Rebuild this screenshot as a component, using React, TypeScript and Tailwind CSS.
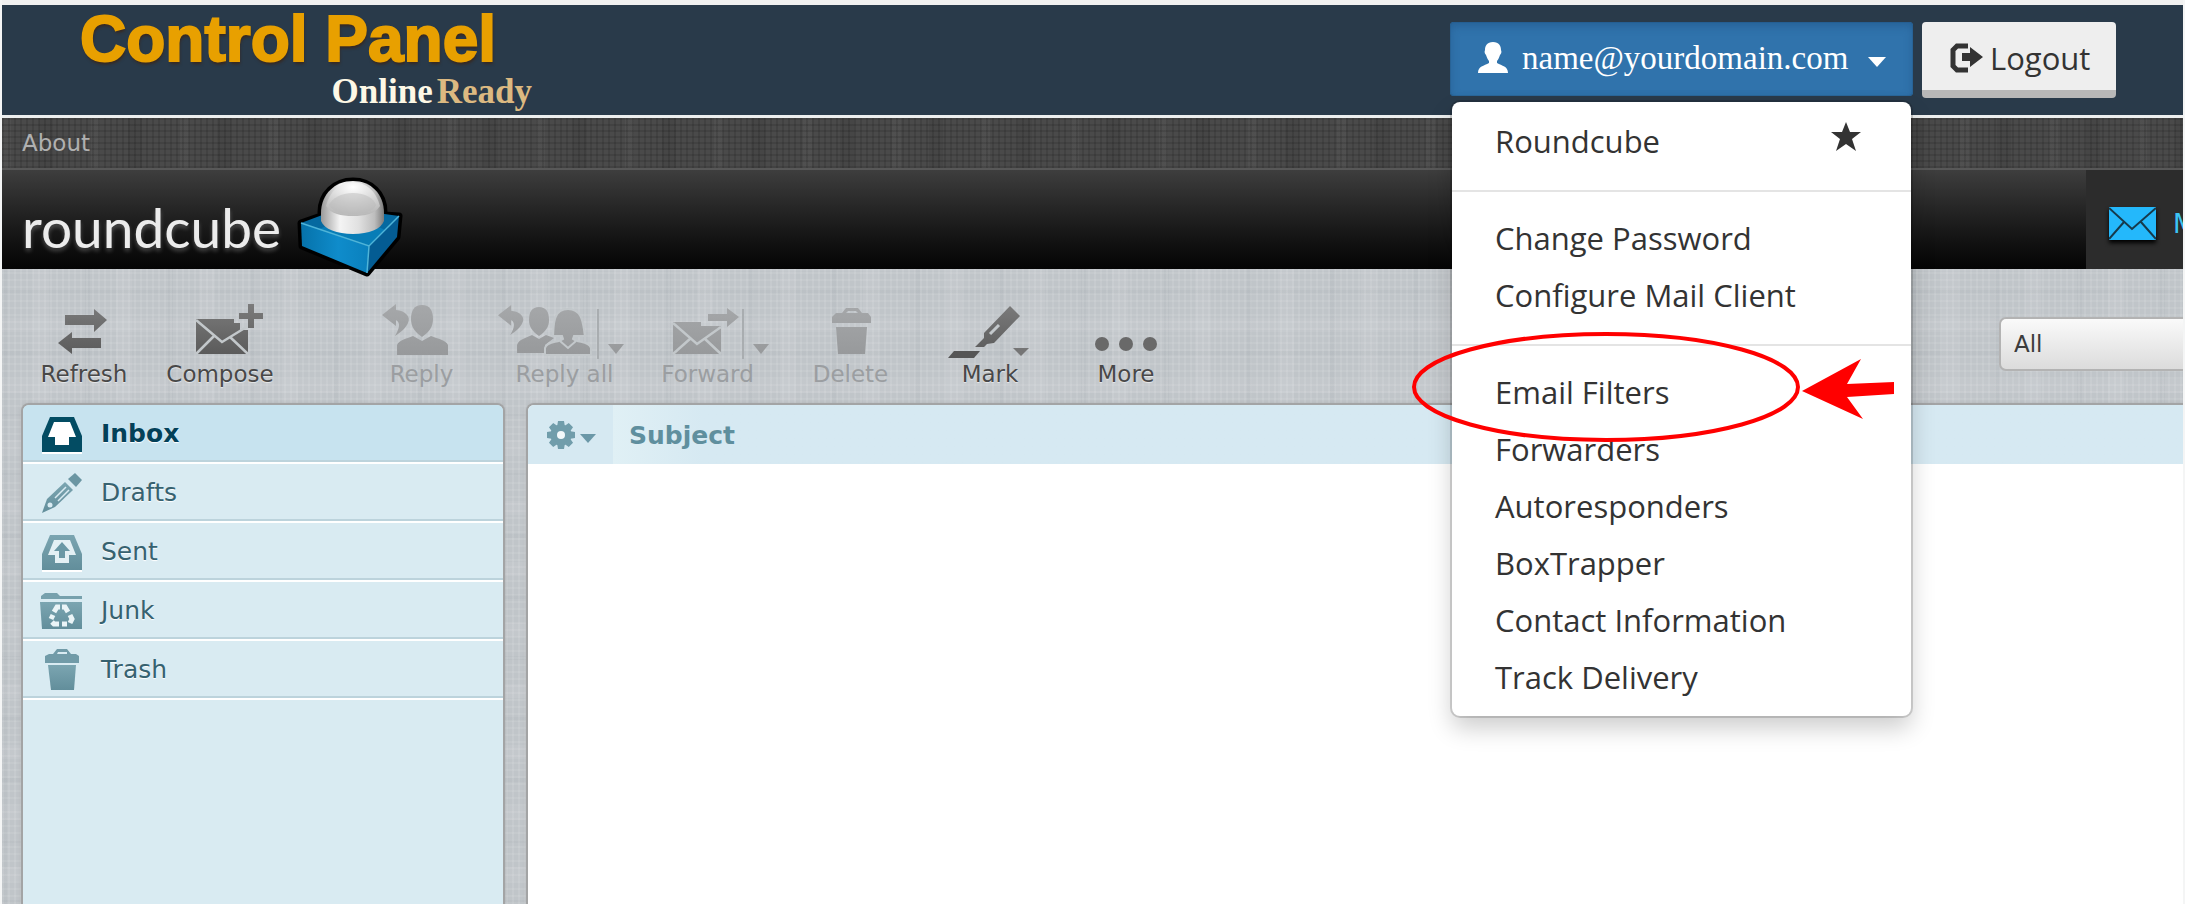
import React from "react";

const linenLight =
  "bg-[#c0c5c9] bg-[image:repeating-linear-gradient(90deg,rgba(255,255,255,0.09)_0_2px,transparent_2px_6px),repeating-linear-gradient(0deg,rgba(255,255,255,0.08)_0_2px,transparent_2px_7px),repeating-linear-gradient(90deg,rgba(110,120,130,0.05)_0_5px,transparent_5px_31px,rgba(255,255,255,0.06)_31px_47px,transparent_47px_83px),repeating-linear-gradient(0deg,rgba(110,120,130,0.05)_0_4px,transparent_4px_23px,rgba(255,255,255,0.06)_23px_37px,transparent_37px_61px)]";

const linenDark =
  "bg-[#4a4a4a] bg-[image:repeating-linear-gradient(90deg,rgba(0,0,0,0.11)_0_2px,transparent_2px_6px),repeating-linear-gradient(0deg,rgba(0,0,0,0.11)_0_2px,transparent_2px_6px),repeating-linear-gradient(90deg,rgba(255,255,255,0.03)_0_9px,transparent_9px_37px,rgba(0,0,0,0.06)_37px_51px,transparent_51px_89px)]";

function Gradients() {
  return (
    <svg className="absolute size-0" aria-hidden="true">
      <defs>
        <linearGradient id="ink" x1="0" y1="0" x2="0" y2="56" gradientUnits="userSpaceOnUse">
          <stop offset="0" stopColor="#7c7c7c" />
          <stop offset="1" stopColor="#585858" />
        </linearGradient>
        <linearGradient id="faded" x1="0" y1="0" x2="0" y2="56" gradientUnits="userSpaceOnUse">
          <stop offset="0" stopColor="#a6a8aa" />
          <stop offset="1" stopColor="#96989a" />
        </linearGradient>
        <linearGradient id="teal" x1="0" y1="0" x2="0" y2="1">
          <stop offset="0" stopColor="#7ba5b1" />
          <stop offset="1" stopColor="#628e9b" />
        </linearGradient>
      </defs>
    </svg>
  );
}

function CubeLogo() {
  return (
    <svg viewBox="0 0 114 108" className="h-[108px] w-[114px] shrink-0" aria-hidden="true">
      <defs>
        <linearGradient id="dome" x1="0" y1="0" x2="1" y2="0">
          <stop offset="0" stopColor="#9a9a9a" />
          <stop offset="0.3" stopColor="#f4f4f4" />
          <stop offset="0.6" stopColor="#e0e0e0" />
          <stop offset="0.85" stopColor="#bdbdbd" />
          <stop offset="1" stopColor="#7c7c7c" />
        </linearGradient>
        <radialGradient id="cap" cx="0.5" cy="0.15" r="0.9">
          <stop offset="0" stopColor="#ffffff" />
          <stop offset="0.5" stopColor="#d9d9d9" />
          <stop offset="1" stopColor="#b4b4b4" />
        </radialGradient>
        <linearGradient id="front" x1="0" y1="0" x2="1" y2="0">
          <stop offset="0" stopColor="#0672aa" />
          <stop offset="0.55" stopColor="#0f8ccb" />
          <stop offset="1" stopColor="#0a80bd" />
        </linearGradient>
      </defs>
      <path
        d="M10 51 30 44V40C30 22 44 9 62 9S93 22 93 40V43L108 44 106 65 76 101 11 74Z"
        fill="#000"
        stroke="#000"
        strokeWidth="7"
        strokeLinejoin="round"
      />
      <path d="M10 51 50 36 108 44 78 74Z" fill="#0569a0" />
      <path d="M28 57C40 70 62 70 78 74L94 58C80 50 50 48 28 57Z" fill="#0a8ac6" opacity="0.6" />
      <path d="M10 51 78 74 76 101 11 74Z" fill="url(#front)" />
      <path d="M108 44 78 74 76 101 106 65Z" fill="#045c93" />
      <path d="M10 51 78 74 108 44M78 74 76 101" fill="none" stroke="#4fb4d8" strokeWidth="1.5" />
      <path d="M30 41C30 22 44 9 62 9S93 22 93 41V49C90 57 78 62 62 62S33 57 30 49Z" fill="url(#dome)" />
      <path d="M35 34C39 19 49 10 62 10S85 19 89 34C84 42 74 44 62 44S40 42 35 34Z" fill="url(#cap)" />
      <path d="M38 33C41 26 50 21 62 21S83 26 85 33C82 40 73 42 62 42S42 40 38 33Z" fill="#b9b9b9" opacity="0.45" />
    </svg>
  );
}

const dim = "url(#faded)";
const ink = "url(#ink)";
const bg = "#c3c8cb";

const replyArrow = "M0 11 14 0V6C24 7 29 13 26 19C24 24 19 28 13 32C17 25 19 19 14 16V22Z";

const toolIcons: Record<string, React.ReactNode> = {
  Refresh: (
    <g fill={ink}>
      <path d="M49 12H78V6L91 17 78 29V22H49Z" />
      <path d="M85 35H56V29L42 40 56 51V45H85Z" />
    </g>
  ),
  Compose: (
    <>
      <path d="M44 16H82V20H88V27H96V51H44Z" fill={ink} />
      <path d="M44 17 70 39 96 23M44 51 62 33M96 51 78 34" stroke={bg} strokeWidth="2.5" fill="none" />
      <path d="M96 1H102V10H111V16H102V25H96V16H87V10H96Z" fill={ink} />
    </>
  ),
  Reply: (
    <g fill={dim}>
      <path d={replyArrow} transform="translate(28 1)" />
      <path d="M68 2C76 2 79 8 79 16C79 24 75 29 68 34C61 29 57 24 57 16C57 8 60 2 68 2Z" />
      <path d="M43 52V42C45 37 52 36 59 33L68 38 77 33C84 36 92 37 94 42V52Z" />
    </g>
  ),
  "Reply all": (
    <>
      <g fill={dim}>
        <path d={replyArrow} transform="translate(1 2) scale(0.94)" />
        <path d="M42 4C49 4 52 9 52 17C52 24 49 28 42 33C35 28 32 24 32 17C32 9 35 4 42 4Z" />
        <path d="M20 50V42C22 36 29 35 35 32L42 36 49 32 57 35 48 42V50Z" />
      </g>
      <path
        d="M56 33C57 24 55 6 71 6C87 6 86 24 88 33H77L76 36C81 40 92 38 94 45V52H48V45C50 38 61 40 66 36L65 33Z"
        fill={dim}
        stroke={bg}
        strokeWidth="2"
      />
      <path d="M111 41H127L119 51Z" fill={dim} />
      <path d="M63 38 71 45 79 38" stroke={bg} strokeWidth="2" fill="none" />
      <path d="M101 6V56" stroke="#a9adb0" strokeWidth="2" />
    </>
  ),
  Forward: (
    <>
      <path d="M33 19H61V23H81V51H33Z" fill={dim} />
      <path d="M33 20 57 41 81 24M33 51 51 35M81 51 64 35" stroke={bg} strokeWidth="2.5" fill="none" />
      <path d="M68 11H87V5L99 14 87 24V18H68Z" fill={dim} />
      <path d="M113 41H129L121 51Z" fill={dim} />
      <path d="M103 6V56" stroke="#a9adb0" strokeWidth="2" />
    </>
  ),
  Delete: (
    <g fill={dim}>
      <path fillRule="evenodd" d="M49 20V14L53 10H59L63 5H75L79 10H85L88 14V20ZM63 10H75L73 8H65Z" />
      <path d="M53 24H84L82 51H55Z" />
    </g>
  ),
  Mark: (
    <>
      <path d="M88 3 98 13 72 40 65 41 62 44H53L62 35V30Z" fill={ink} />
      <path d="M68 31 77 22" stroke={bg} strokeWidth="3" />
      <path d="M26 55 32 48H58L52 55Z" fill="#555" />
      <path d="M91 45H107L99 53Z" fill="#757575" />
    </>
  ),
  More: (
    <g fill="#696969">
      <circle cx="44" cy="41" r="7" />
      <circle cx="68" cy="41" r="7" />
      <circle cx="92" cy="41" r="7" />
    </g>
  ),
};

function ToolButton({ label, disabled, wide }: { label: string; disabled?: boolean; wide?: boolean }) {
  return (
    <button
      type="button"
      disabled={disabled}
      className={`flex shrink-0 flex-col items-center ${wide ? "w-[143px]" : "w-[136px]"} ${
        disabled ? "text-[#9b9ea1]" : "text-[#484848] [text-shadow:0_1px_1px_#e8eaeb]"
      }`}
    >
      <svg viewBox="0 0 136 57" className="h-[57px] w-[136px]" aria-hidden="true">
        {toolIcons[label]}
      </svg>
      <span className="whitespace-nowrap text-[23px] leading-[28px]">{label}</span>
    </button>
  );
}

const tray = "M10 5H34L42 24V40H2V24Z";
const folders: { name: string; icon: React.ReactNode }[] = [
  {
    name: "Inbox",
    icon: (
      <>
        <path d={tray} fill="#034c63" />
        <path d="M14 10H30L36 25H29V33H15V25H8Z" fill="#fff" />
        <path d="M2 41H42" stroke="#fff" strokeWidth="2" />
      </>
    ),
  },
  {
    name: "Drafts",
    icon: (
      <>
        <path d="M2 42 7 28 25 11 33 19 15 36Z" fill="url(#teal)" />
        <path d="M28 8 35 2 42 9 36 16Z" fill="#6b96a3" />
        <path d="M15 27 26 16M18 30 29 19" stroke="#d9ebf2" strokeWidth="1.5" />
        <circle cx="10" cy="34" r="2.5" fill="#d9ebf2" />
      </>
    ),
  },
  {
    name: "Sent",
    icon: (
      <>
        <path d={tray} fill="url(#teal)" />
        <path d="M14 10H30L36 25H29V33H15V25H8Z" fill="#e4f0f4" />
        <path d="M22 12 30 21H25V28H19V21H14Z" fill="#6b98a5" />
        <path d="M2 41H42" stroke="#fff" strokeWidth="2" />
      </>
    ),
  },
  {
    name: "Junk",
    icon: (
      <>
        <path d="M1 10V7L5 4H17L20 7H42V10Z" fill="#77a1ad" />
        <path d="M0 13H42V40H2Z" fill="url(#teal)" />
        <g fill="none" stroke="#eaf4f7" strokeWidth="5">
          <path d="M14 23 17 18H20" />
          <path d="M22 18H25L28 23" />
          <path d="M30 26 32 30 30 34" />
          <path d="M27 35H22" />
          <path d="M19 35H14L12 33" />
          <path d="M11 30 13 26" />
        </g>
      </>
    ),
  },
  {
    name: "Trash",
    icon: (
      <>
        <path fillRule="evenodd" d="M5 15V8L9 6H13L17 1H27L31 6H36L39 8V15ZM17 6H27V4H18Z" fill="#719ba8" />
        <path d="M8 17H36L34 42H11Z" fill="url(#teal)" />
      </>
    ),
  },
];

function MenuItem({ children }: { children: React.ReactNode }) {
  return (
    <a href="#" className="flex h-[57px] items-center pr-[50px] pb-[4px] pl-[43px]">
      {children}
    </a>
  );
}

function AccountMenu() {
  return (
    <ul className="absolute top-full left-[2px] mt-[6px] w-[459px] rounded-[8px] bg-white pt-[12px] pb-[9px] font-['Open_Sans',sans-serif] text-[31px] leading-[40px] text-[#333] shadow-[0_0_0_2px_rgba(0,0,0,0.15),0_12px_24px_rgba(0,0,0,0.2)]">
      <li>
        <MenuItem>
          <span className="flex-1">Roundcube</span>
          <svg viewBox="0 0 30 30" className="size-[30px] -translate-y-1" fill="#333" aria-hidden="true">
            <path d="M15 0 19 10H30L21 17 25 29 15 22 5 29 9 17 0 10H11Z" />
          </svg>
        </MenuItem>
      </li>
      <li className="my-[19px] h-[2px] bg-[#e4e4e4]" />
      <li><MenuItem>Change Password</MenuItem></li>
      <li><MenuItem>Configure Mail Client</MenuItem></li>
      <li className="my-[19px] h-[2px] bg-[#e4e4e4]" />
      <li className="relative">
        <MenuItem>Email Filters</MenuItem>
        <svg
          viewBox="0 0 490 116"
          className="pointer-events-none absolute -top-[36px] -left-[42px] z-10 h-[116px] w-[490px]"
          aria-hidden="true"
        >
          <ellipse cx="196" cy="58" rx="192" ry="53" fill="none" stroke="#f00" strokeWidth="4" />
          <path d="M392 62 451 30 437 55 484 53V65L437 68 453 90Z" fill="#f00" />
        </svg>
      </li>
      <li><MenuItem>Forwarders</MenuItem></li>
      <li><MenuItem>Autoresponders</MenuItem></li>
      <li><MenuItem>BoxTrapper</MenuItem></li>
      <li><MenuItem>Contact Information</MenuItem></li>
      <li><MenuItem>Track Delivery</MenuItem></li>
    </ul>
  );
}

export default function App() {
  return (
    <div className={`flex min-h-screen flex-col overflow-hidden border-x-2 border-[#f4f5f5] font-['DejaVu_Sans',sans-serif] ${linenLight}`}>
      <Gradients />
      <header className="relative z-20 flex h-[118px] items-start border-t-[5px] border-b-[3px] border-t-[#f0f0f0] border-b-[#eceeee] bg-[#293a4a] pr-[67px] pl-[78px]">
        <div className="flex flex-col">
          <h1 className="mt-[2px] font-['Liberation_Sans',Arial,sans-serif] text-[64px] leading-[64px] font-bold text-[#e8a000] [-webkit-text-stroke:2px_#e8a000] [stroke-linejoin:round] [text-shadow:1px_3px_3px_rgba(60,35,20,0.8)]">
            Control Panel
          </h1>
          <p className="mt-px -mr-[36px] flex gap-1 self-end font-['Liberation_Serif',serif] text-[35px] leading-[40px] font-bold text-[#fdf8e6]">
            <span>Online</span>
            <span className="text-[#dcb981]">Ready</span>
          </p>
        </div>
        <div className="ml-auto flex items-start gap-[9px] pt-[17px]">
          <div className="relative">
            <button
              type="button"
              aria-expanded="true"
              className="flex h-[74px] w-[463px] items-center rounded-[4px] bg-[#3073ac] pr-[27px] pb-[2px] pl-[28px] text-white shadow-[inset_0_4px_8px_rgba(30,80,130,0.5),inset_0_0_0_1px_#2c699d]"
            >
              <svg viewBox="0 0 30 32" className="h-[32px] w-[30px]" fill="currentColor" aria-hidden="true">
                <path d="M15 0C21 0 23 4 23 8C24 10 23 12 22 13C21 16 20 18 19 19V21C24 24 30 24 30 31H0C0 24 6 24 11 21V19C10 18 9 16 8 13C7 12 6 10 7 8C7 4 9 0 15 0Z" />
              </svg>
              <span className="ml-[14px] font-['Liberation_Serif',serif] text-[33px] leading-[40px]">name@yourdomain.com</span>
              <svg viewBox="0 0 18 10" className="mt-2 ml-auto h-[10px] w-[18px]" fill="currentColor" aria-hidden="true">
                <path d="M0 0H18L9 10Z" />
              </svg>
            </button>
            <AccountMenu />
          </div>
          <button
            type="button"
            className="flex h-[76px] w-[194px] items-center gap-[7px] rounded-[4px] border-b-[8px] border-[#b8b8b8] bg-[#eee] pt-[3px] pl-[28px] font-['Open_Sans',sans-serif] text-[31px] leading-[40px] text-[#333]"
          >
            <svg viewBox="0 0 33 30" className="h-[30px] w-[33px]" aria-hidden="true">
              <path d="M18 3H7L3 7V23L7 27H18" fill="none" stroke="#333" strokeWidth="5" />
              <path d="M12 10H20V4L33 14 20 24V18H12Z" fill="#333" />
            </svg>
            Logout
          </button>
        </div>
      </header>

      <nav className={`flex h-[52px] items-center border-b-2 border-[#585858] px-[20px] ${linenDark}`}>
        <a href="#" className="text-[23px] leading-[28px] text-[#b0b0b0]">About</a>
      </nav>

      <div className="relative flex h-[99px] items-start bg-linear-to-b from-[#3e3e3e] to-[#050505] pl-[20px]">
        <span className="pt-[25px] font-['Lato',sans-serif] text-[55px] leading-[64px] text-[#ececec] [text-shadow:0_3px_4px_rgba(255,255,255,0.25)]">
          roundcube
        </span>
        <div className="ml-[10px] h-[99px] pt-[2px]">
          <CubeLogo />
        </div>
        <a
          href="#"
          className="ml-auto flex h-[99px] w-[97px] items-center gap-[17px] overflow-hidden bg-[#2c2c2c] pl-[23px] text-[26px] leading-[32px] text-[#3cc4f4]"
        >
          <svg viewBox="0 0 47 33" className="mt-[8px] h-[33px] w-[47px] shrink-0 drop-shadow-[0_3px_2px_#000]" aria-hidden="true">
            <path d="M0 0H47V33H0Z" fill="#24b8fb" />
            <path d="M0 1 23 22 47 1M0 32 15 15M47 32 32 15" fill="none" stroke="#163a4c" strokeWidth="2" />
          </svg>
          <span className="mt-[8px]">Mail</span>
        </a>
      </div>

      <div className="flex items-start pt-[34px] pb-[17px] pl-[14px]">
        <ToolButton label="Refresh" />
        <ToolButton label="Compose" />
        <div className="ml-[62px] flex">
          <ToolButton label="Reply" disabled wide />
          <ToolButton label="Reply all" disabled wide />
          <ToolButton label="Forward" disabled wide />
          <ToolButton label="Delete" disabled wide />
        </div>
        <ToolButton label="Mark" />
        <ToolButton label="More" />
        <div className="mt-[14px] ml-auto flex w-[184px] overflow-hidden">
          <select
            aria-label="Filter messages"
            className="h-[54px] w-[260px] shrink-0 appearance-none rounded-[7px] border-2 border-[#b3b3b3] bg-linear-to-b from-[#fafafa] to-[#dcdcdc] pl-[13px] text-[23px] text-[#3c3c3c]"
          >
            <option>All</option>
            <option>Unread</option>
          </select>
        </div>
      </div>

      <main className="flex flex-1 gap-[25px] pl-[21px]">
        <aside className="w-[480px] shrink-0 overflow-hidden rounded-t-[6px] bg-[#d9ebf2] shadow-[0_0_0_2px_#a3a4a5,0_0_5px_#999]">
          <ul>
            {folders.map((f, i) => (
              <li key={f.name}>
                <a
                  href="#"
                  className={`flex h-[59px] items-center gap-[17px] border-b-2 border-white pl-[17px] text-[25px] leading-[32px] shadow-[inset_0_-2px_0_#bcd3dc] [text-shadow:0_1px_1px_#fff] ${
                    i === 0 ? "bg-[#c7e3ef] font-bold text-[#034158]" : "text-[#376270]"
                  }`}
                >
                  <svg viewBox="0 0 44 44" className="size-[44px] shrink-0" aria-hidden="true">
                    {f.icon}
                  </svg>
                  {f.name}
                </a>
              </li>
            ))}
          </ul>
        </aside>
        <section className="flex-1 overflow-hidden rounded-tl-[6px] bg-white shadow-[0_0_0_2px_#a3a4a5,0_0_5px_#999]">
          <table className="w-full">
            <thead>
              <tr className="h-[59px] bg-[#d6e9f2] text-left">
                <th className="w-[85px] p-0">
                  <button type="button" aria-label="List options" className="flex items-center gap-[4px] pl-[18px]">
                    <svg viewBox="-15 -15 30 30" className="size-[30px]" aria-hidden="true">
                      <g fill="#719dab">
                        <circle r="10.5" />
                        <path d="M-3-14H3L4-8H-4ZM-3 14H3L4 8H-4ZM-14-3V3L-8 4V-4ZM14-3V3L8 4V-4Z" />
                        <path d="M-3-14H3L4-8H-4ZM-3 14H3L4 8H-4ZM-14-3V3L-8 4V-4ZM14-3V3L8 4V-4Z" transform="rotate(45)" />
                      </g>
                      <circle r="4" fill="#f2f8fa" />
                    </svg>
                    <svg viewBox="0 0 16 10" className="mt-2 h-[10px] w-[16px]" aria-hidden="true">
                      <path d="M0 0H16L8 9Z" fill="#6b98a8" />
                    </svg>
                  </button>
                </th>
                <th className="bg-linear-to-r from-[#e0f0f5] to-[#d6e9f2] to-[90px] p-0 pt-[2px] pl-[16px] text-[25px] leading-[32px] font-bold text-[#5f8f9e]">
                  Subject
                </th>
              </tr>
            </thead>
          </table>
        </section>
      </main>
    </div>
  );
}
